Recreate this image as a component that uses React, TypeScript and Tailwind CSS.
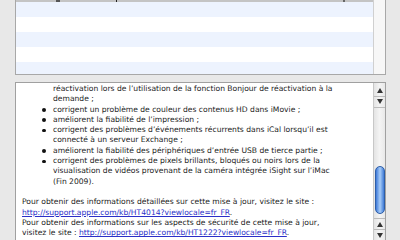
import React from "react";

const font = { fontFamily: '"DejaVu Sans", "Liberation Sans", sans-serif' };

function Line({ children, indent = 0, bullet = false }: { children: React.ReactNode; indent?: number; bullet?: boolean }) {
  return (
    <div className="relative h-[10.3px] whitespace-nowrap leading-[10.3px]" style={{ paddingLeft: indent }}>
      {bullet && <span className="absolute left-[20px] top-[3.6px] h-[3.6px] w-[3.6px] rounded-full bg-[#111]" />}
      {children}
    </div>
  );
}

function Arrow({ up }: { up?: boolean }) {
  return (
    <div className="flex h-[11px] items-center justify-center">
      <svg width="6" height="5" viewBox="0 0 6 5">
        {up ? <path d="M3 0 L6 5 L0 5 Z" fill="#333" /> : <path d="M0 0 L6 0 L3 5 Z" fill="#333" />}
      </svg>
    </div>
  );
}

export default function App() {
  const rows = ["bg-[#edf3fe]", "bg-white", "bg-[#edf3fe]", "bg-white", "bg-[#edf3fe]"];
  return (
    <div className="flex h-[240px] w-[400px] flex-col overflow-hidden bg-[#e8e8e8] pl-[15px] pr-[14px]" style={font}>
      <div className="flex h-[75px] border-x border-b border-[#a8a8a8]">
        <div className="flex flex-1 flex-col">
          <div className="relative h-[2px] bg-[#c4c4c4]">
            <span className="absolute left-[40px] top-0 h-[2px] w-[4px] bg-[#555]" />
            <span className="absolute left-[100px] top-0 h-[2px] w-[1px] bg-[#222]" />
            <span className="absolute left-[327px] top-0 h-[2px] w-[2px] bg-[#666]" />
          </div>
          {rows.map((c, i) => (
            <div key={i} className={`${c} ${i === 4 ? "h-[12px]" : "h-[15px]"}`} />
          ))}
        </div>
        <div className="w-[12px] border-l border-[#d0d0d0] bg-[#f7f7f7]" />
      </div>
      <div className="mt-[7px] flex h-[160px] border border-[#a0a0a0] bg-white">
        <div className="flex-1 pl-[6px] pt-[1px] text-[7.6px] text-[#1c1c1c]">
          <Line indent={31}>réactivation lors de l’utilisation de la fonction Bonjour de réactivation à la</Line>
          <Line indent={31}>demande ;</Line>
          <Line indent={31} bullet>corrigent un problème de couleur des contenus HD dans iMovie ;</Line>
          <Line indent={31} bullet>améliorent la fiabilité de l’impression ;</Line>
          <Line indent={31} bullet>corrigent des problèmes d’événements récurrents dans iCal lorsqu’il est</Line>
          <Line indent={31}>connecté à un serveur Exchange ;</Line>
          <Line indent={31} bullet>améliorent la fiabilité des périphériques d’entrée USB de tierce partie ;</Line>
          <Line indent={31} bullet>corrigent des problèmes de pixels brillants, bloqués ou noirs lors de la</Line>
          <Line indent={31}>visualisation de vidéos provenant de la caméra intégrée iSight sur l’iMac</Line>
          <Line indent={31}>(Fin 2009).</Line>
          <Line>{"\u00a0"}</Line>
          <Line>Pour obtenir des informations détaillées sur cette mise à jour, visitez le site :</Line>
          <Line>
            <span className="text-[#2a2fc8] underline">http://support.apple.com/kb/HT4014?viewlocale=fr_FR</span>.
          </Line>
          <Line>Pour obtenir des informations sur les aspects de sécurité de cette mise à jour,</Line>
          <Line>
            visitez le site : <span className="text-[#2a2fc8] underline">http://support.apple.com/kb/HT1222?viewlocale=fr_FR</span>.
          </Line>
        </div>
        <div className="flex w-[12px] flex-col border-l border-[#c8c8c8] bg-gradient-to-r from-[#e4e4e4] via-[#f4f4f4] to-[#e8e8e8]">
          <div className="h-[2px]" />
          <Arrow up />
          <div className="border-t border-[#bbb]" />
          <Arrow />
          <div className="border-t border-[#bbb]" />
          <div className="h-[60px]" />
          <div className="mx-auto h-[50px] w-[10px] rounded-full border border-[#2d5ea8] bg-gradient-to-r from-[#3d78d8] via-[#a9cdf7] to-[#3f7ad6]" />
          <div className="h-[4px]" />
          <div className="border-t border-[#bbb]" />
          <Arrow up />
          <div className="border-t border-[#bbb]" />
          <Arrow />
        </div>
      </div>
    </div>
  );
}
